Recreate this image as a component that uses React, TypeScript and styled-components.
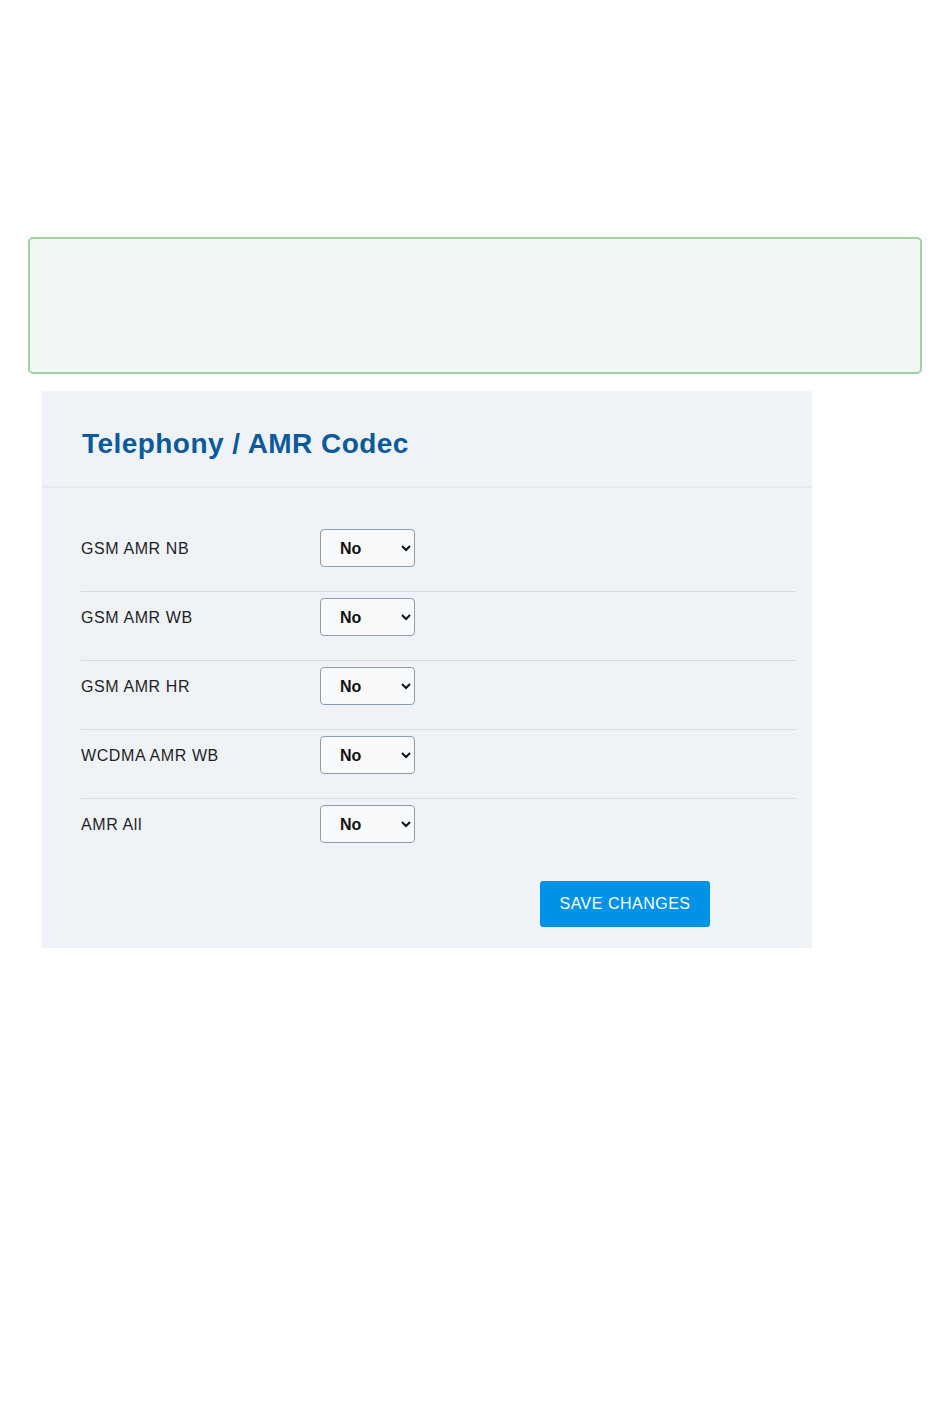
import React from "react";
import styled, { createGlobalStyle } from "styled-components";

const Global = createGlobalStyle`
  html, body { margin: 0; padding: 0; background: #ffffff; }
  body { font-family: "Liberation Sans", Arial, sans-serif; color: #222; }
`;

const Page = styled.div`
  width: 950px;
  min-height: 1408px;
  padding-top: 237px;
  box-sizing: border-box;
`;

const Alert = styled.div`
  margin: 0 28px 0 28px;
  height: 137px;
  box-sizing: border-box;
  border: 2px solid #9fd3a6;
  border-radius: 5px;
  background: #f1f7f3;
`;

const Panel = styled.section`
  margin: 17px 0 0 42px;
  width: 770px;
  background: #eff3f8;
  padding-bottom: 21px;
`;

const Header = styled.header`
  height: 96px;
  box-sizing: border-box;
  padding: 36px 0 0 40px;
  border-bottom: 1px solid #e3e8ee;
  box-shadow: 0 1px 1px rgba(0, 0, 0, 0.03);
`;

const Title = styled.h1`
  margin: 0;
  font-family: "Liberation Sans", Arial, sans-serif;
  font-size: 28px;
  font-weight: bold;
  letter-spacing: 0.45px;
  color: #0b5a9b;
  line-height: 34px;
`;

const Body = styled.div`
  padding: 42px 16px 0 39px;
`;

const Row = styled.div<{ $first?: boolean; $last?: boolean }>`
  display: flex;
  align-items: center;
  padding: ${(p) => (p.$first ? "0" : "6px")} 0 ${(p) => (p.$last ? "0" : "24px")} 0;
  border-bottom: ${(p) => (p.$last ? "none" : "1px solid #d6dbe1")};
`;

const Label = styled.label`
  width: 239px;
  font-size: 16px;
  letter-spacing: 0.6px;
  color: #1f1f1f;
  padding-top: 1px;
`;

const Select = styled.select`
  width: 95px;
  height: 38px;
  padding: 0 8px 0 15px;
  font-family: "Liberation Sans", Arial, sans-serif;
  font-size: 16px;
  font-weight: bold;
  color: #111;
  background: #f8fafc;
  border: 1px solid #8a9db1;
  border-radius: 4px;
`;

const Actions = styled.div`
  display: flex;
  padding: 38px 0 0 459px;
`;

const Button = styled.button`
  width: 170px;
  height: 46px;
  border: none;
  border-radius: 3px;
  background: #0092e8;
  color: #fff;
  font-family: "Liberation Sans", Arial, sans-serif;
  font-size: 16px;
  letter-spacing: 0.5px;
  text-transform: uppercase;
  cursor: pointer;
`;

const items = ["GSM AMR NB", "GSM AMR WB", "GSM AMR HR", "WCDMA AMR WB", "AMR All"];

export default function App() {
  return (
    <Page>
      <Global />
      <Alert />
      <Panel>
        <Header>
          <Title>Telephony / AMR Codec</Title>
        </Header>
        <Body>
          {items.map((it, i) => (
            <Row key={it} $first={i === 0} $last={i === items.length - 1}>
              <Label>{it}</Label>
              <Select defaultValue="No">
                <option>No</option>
                <option>Yes</option>
              </Select>
            </Row>
          ))}
          <Actions>
            <Button>Save Changes</Button>
          </Actions>
        </Body>
      </Panel>
    </Page>
  );
}
